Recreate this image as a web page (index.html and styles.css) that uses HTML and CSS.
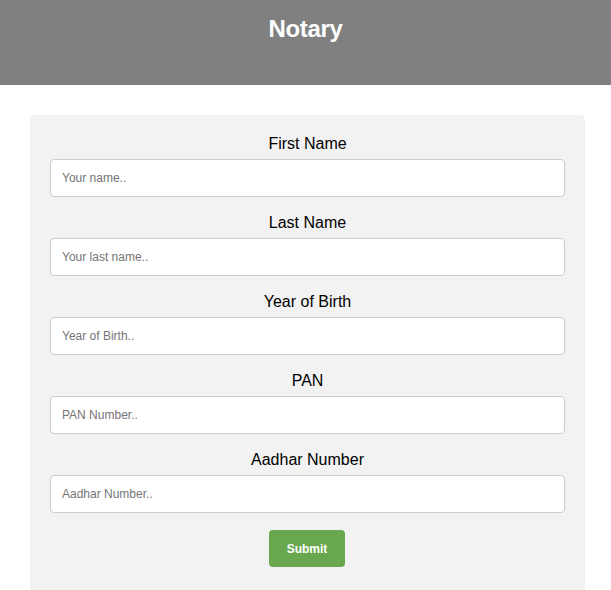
FILE: index.html
```html
<!DOCTYPE html>
<html>
<head>
<meta charset="utf-8">
<link rel="stylesheet" href="styles.css">
</head>
<body>
<header class="header"><h1 class="title">Notary</h1></header>
<main class="card">
  <form class="form">
    <label class="label">First Name</label>
    <input class="field" type="text" placeholder="Your name..">
    <label class="label">Last Name</label>
    <input class="field" type="text" placeholder="Your last name..">
    <label class="label">Year of Birth</label>
    <input class="field" type="text" placeholder="Year of Birth..">
    <label class="label">PAN</label>
    <input class="field" type="text" placeholder="PAN Number..">
    <label class="label">Aadhar Number</label>
    <input class="field" type="text" placeholder="Aadhar Number..">
    <button class="submit" type="button">Submit</button>
  </form>
</main>
</body>
</html>
```
FILE: styles.css
```css
html, body {
  margin: 0;
  padding: 0;
  background: #ffffff;
  font-family: "Liberation Sans", Arial, sans-serif;
}
.header {
  background: #808080;
  height: 85px;
  box-sizing: border-box;
  padding-top: 15px;
}
.title {
  margin: 0;
  text-align: center;
  color: #ffffff;
  font-size: 24px;
  line-height: 28px;
  font-weight: bold;
  letter-spacing: -0.3px;
}
.card {
  margin: 30px 26px 0 30px;
  background: #f2f2f2;
  border-radius: 5px 5px 0 0;
  padding: 20px 20px 23px 20px;
}
.form {
  display: flex;
  flex-direction: column;
}
.label {
  display: block;
  text-align: center;
  font-size: 16px;
  line-height: 18px;
  color: #000;
  margin-bottom: 6px;
}
.field {
  box-sizing: border-box;
  width: 100%;
  height: 38px;
  border: 1px solid #cccccc;
  border-radius: 4px;
  background: #fff;
  padding: 0 11px;
  font-family: "Liberation Sans", Arial, sans-serif;
  font-size: 12px;
  margin: 0 0 17px 0;
}
.field::placeholder {
  color: #757575;
}
.field:last-of-type {
  margin-bottom: 17px;
}
.submit {
  align-self: center;
  width: 76px;
  height: 37px;
  margin-right: 1px;
  border: none;
  border-radius: 4px;
  background: #69a74e;
  color: #fff;
  font-family: "Liberation Sans", Arial, sans-serif;
  font-size: 12px;
  font-weight: bold;
  cursor: pointer;
}
```
